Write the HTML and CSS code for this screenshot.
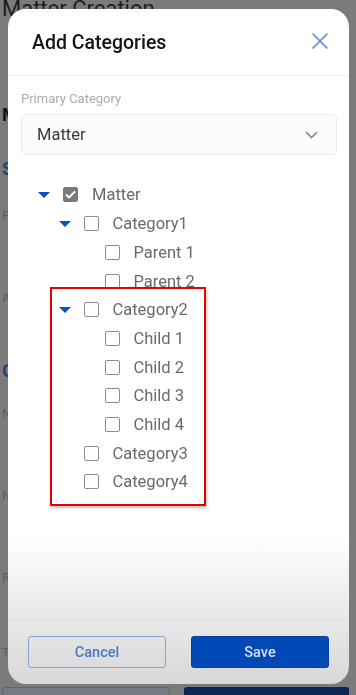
FILE: index.html
```html
<!DOCTYPE html>
<html>
<head>
<meta charset="utf-8">
<link rel="stylesheet" href="styles.css">
</head>
<body>
<div class="page">
  <div class="page-title">Matter Creation</div>
  <div class="frag frag-m">M</div>
  <div class="frag frag-s">S</div>
  <div class="frag frag-p">P</div>
  <div class="frag frag-a">A</div>
  <div class="frag frag-g">G</div>
  <div class="frag frag-n1">N</div>
  <div class="frag frag-n2">N</div>
  <div class="frag frag-r">R</div>
  <div class="frag frag-t">Ti</div>
  <div class="page-footer">
    <div class="page-btn page-btn-outline"></div>
    <div class="page-btn page-btn-fill"></div>
  </div>
</div>

<div class="modal">
  <div class="modal-header">
    <div class="modal-title">Add Categories</div>
    <svg class="close" width="16" height="16" viewBox="0 0 16 16"><path d="M1 1 L15 15 M15 1 L1 15" stroke="#5b87d6" stroke-width="1.6" fill="none" stroke-linecap="round"/></svg>
  </div>
  <div class="modal-body">
    <div class="field-label">Primary Category</div>
    <div class="select">
      <span class="select-value">Matter</span>
      <svg width="13" height="8" viewBox="0 0 13 8"><path d="M1 1 L6.5 6.5 L12 1" stroke="#8a8a8a" stroke-width="1.6" fill="none"/></svg>
    </div>
    <div class="tree">
      <div class="row lvl0"><span class="caret"></span><span class="cb checked"><svg width="11" height="9" viewBox="0 0 11 9"><path d="M1 4.5 L4 7.5 L10 1.5" stroke="#fff" stroke-width="1.8" fill="none"/></svg></span><span class="label">Matter</span></div>
      <div class="row lvl1"><span class="caret"></span><span class="cb"></span><span class="label">Category1</span></div>
      <div class="row lvl2"><span class="nocaret"></span><span class="cb"></span><span class="label">Parent 1</span></div>
      <div class="row lvl2"><span class="nocaret"></span><span class="cb"></span><span class="label">Parent 2</span></div>
      <div class="row lvl1"><span class="caret"></span><span class="cb"></span><span class="label">Category2</span></div>
      <div class="row lvl2"><span class="nocaret"></span><span class="cb"></span><span class="label">Child 1</span></div>
      <div class="row lvl2"><span class="nocaret"></span><span class="cb"></span><span class="label">Child 2</span></div>
      <div class="row lvl2"><span class="nocaret"></span><span class="cb"></span><span class="label">Child 3</span></div>
      <div class="row lvl2"><span class="nocaret"></span><span class="cb"></span><span class="label">Child 4</span></div>
      <div class="row lvl1"><span class="nocaret"></span><span class="cb"></span><span class="label">Category3</span></div>
      <div class="row lvl1"><span class="nocaret"></span><span class="cb"></span><span class="label">Category4</span></div>
      <div class="highlight"></div>
    </div>
  </div>
  <div class="modal-footer">
    <button class="btn btn-cancel">Cancel</button>
    <button class="btn btn-save">Save</button>
  </div>
</div>
</body>
</html>
```

FILE: styles.css
```css
html, body {
  margin: 0;
  padding: 0;
}
body {
  background: #7b7b7b;
  font-family: Roboto, "Liberation Sans", sans-serif;
  width: 356px;
  height: 695px;
  overflow: hidden;
}
.page {
  height: 695px;
  display: flex;
  flex-direction: column;
  padding-left: 2px;
  box-sizing: border-box;
}
.page-title {
  font-size: 22px;
  line-height: 22px;
  color: #1e1e1e;
  margin-top: -2px;
}
.frag {
  font-size: 16px;
  line-height: 18px;
  color: #5e5e5e;
}
.frag-m { margin-top: 86px; color: #151515; font-weight: 700; font-size: 18px; }
.frag-s { margin-top: 36px; color: #23407a; font-weight: 700; font-size: 18px; }
.frag-p { margin-top: 29px; font-size: 13px; }
.frag-a { margin-top: 64px; font-size: 13px; }
.frag-g { margin-top: 55px; color: #23407a; font-weight: 700; font-size: 18px; }
.frag-n1 { margin-top: 25px; font-size: 13px; }
.frag-n2 { margin-top: 64px; font-size: 13px; }
.frag-r { margin-top: 64px; font-size: 13px; }
.frag-t { margin-top: 57px; font-size: 13px; }
.page-footer {
  margin-top: auto;
  display: flex;
  gap: 14px;
  height: 8px;
  padding-right: 7px;
}
.page-btn {
  flex: 1;
  border-radius: 3px 3px 0 0;
}
.page-btn-outline {
  border: 1px solid #5a6680;
  border-bottom: none;
  background: #767a82;
}
.page-btn-fill {
  background: #0e2452;
}

.modal {
  position: fixed;
  left: 8px;
  top: 9px;
  width: 341px;
  height: 675px;
  border-radius: 18px;
  background: linear-gradient(to bottom, #ffffff 0%, #ffffff 78%, #ececec 88%, #d8d8d8 100%);
  display: flex;
  flex-direction: column;
  overflow: hidden;
}
.modal-header {
  height: 66px;
  flex: none;
  display: flex;
  align-items: center;
  justify-content: space-between;
  padding: 0 21px 0 24px;
  border-bottom: 1px solid #f0f0f0;
}
.modal-title {
  font-size: 19.5px;
  font-weight: 500;
  color: #141414;
}
.close {
  margin-top: -2px;
}
.modal-body {
  flex: 1;
  padding: 15px 12px 0 13px;
  position: relative;
}
.field-label {
  font-size: 13px;
  line-height: 16px;
  color: #ababab;
  margin-bottom: 7px;
}
.select {
  height: 41px;
  box-sizing: border-box;
  border: 1px solid #ececec;
  border-radius: 5px;
  background: #fbfbfb;
  display: flex;
  align-items: center;
  justify-content: space-between;
  padding: 0 18px 0 15px;
}
.select-value {
  font-size: 16.5px;
  color: #3a3a3a;
}
.tree {
  margin-top: 25.6px;
  position: relative;
  padding-left: 17px;
}
.row {
  height: 28.7px;
  display: flex;
  align-items: center;
}
.lvl1 { padding-left: 20.5px; }
.lvl2 { padding-left: 41.5px; }
.caret, .nocaret {
  width: 12px;
  flex: none;
  margin-right: 13px;
}
.caret {
  width: 0;
  height: 0;
  border-left: 6px solid transparent;
  border-right: 6px solid transparent;
  border-top: 6.5px solid #0a50c2;
}
.cb {
  width: 15px;
  height: 15px;
  box-sizing: border-box;
  border: 1.6px solid #8c8c8c;
  border-radius: 2px;
  flex: none;
  display: flex;
  align-items: center;
  justify-content: center;
  margin-right: 14px;
}
.cb.checked {
  background: #7a7a7a;
  border-color: #7a7a7a;
}
.label {
  font-size: 16.5px;
  color: #6a6a6a;
}
.highlight {
  position: absolute;
  left: 29px;
  top: 106.5px;
  width: 156px;
  height: 219px;
  box-sizing: border-box;
  border: 2px solid #e30000;
  box-shadow: 1px 2px 3px rgba(0,0,0,0.25);
}
.modal-footer {
  flex: none;
  border-top: 1px solid rgba(0,0,0,0.05);
  padding: 15px 20px 16px 20px;
  display: flex;
  gap: 25px;
}
.btn {
  flex: 1;
  height: 32px;
  font-family: Roboto, "Liberation Sans", sans-serif;
  font-size: 14.5px;
  font-weight: 500;
  border-radius: 3px;
  cursor: pointer;
}
.btn-cancel {
  background: transparent;
  border: 1.5px solid #85a2d6;
  color: #4d76c2;
}
.btn-save {
  background: #0049b7;
  border: 1px solid #0a3f96;
  color: #d4def0;
}
```
